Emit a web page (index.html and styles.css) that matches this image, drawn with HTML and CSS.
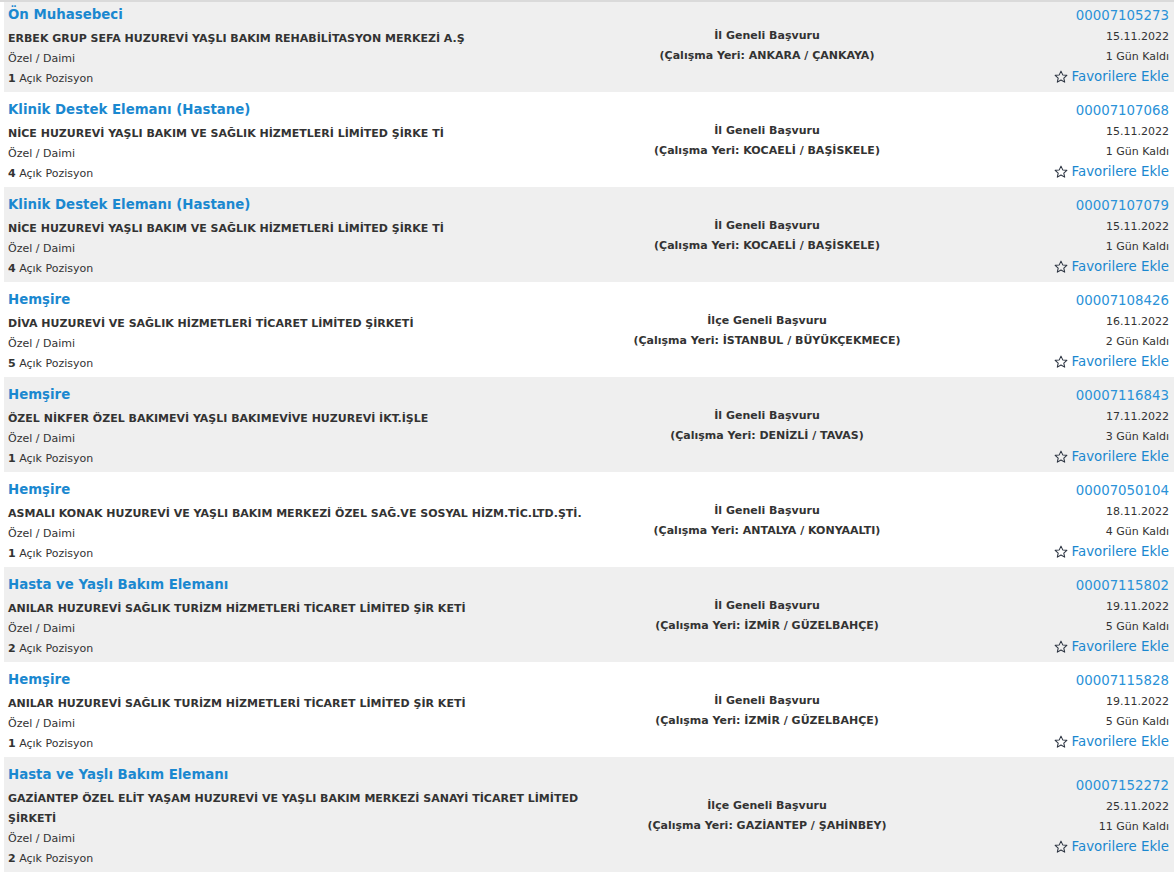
FILE: index.html
```html
<!doctype html>
<html lang="tr">
<head>
  <meta charset="utf-8" />
  <title>İş İlanları</title>
  <link rel="stylesheet" href="styles.css">
</head>
<body>

<div class="results">
  <ul class="list">
    <li class="job">
      <div class="job-main">
        <a class="job-title" href="#">Ön Muhasebeci</a>
        <div class="company">ERBEK GRUP SEFA HUZUREVİ YAŞLI BAKIM REHABİLİTASYON MERKEZİ A.Ş</div>
        <div class="meta">Özel / Daimi</div>
        <div class="meta"><b>1</b> Açık Pozisyon</div>
      </div>
      <div class="job-place">
        <div>İl Geneli Başvuru</div>
        <div>(Çalışma Yeri: ANKARA / ÇANKAYA)</div>
      </div>
      <div class="job-side">
        <a class="job-no" href="#">00007105273</a>
        <div>15.11.2022</div>
        <div>1 Gün Kaldı</div>
        <a class="fav" href="#"><svg viewBox="0 0 16 16" width="14" height="14"><path d="M8 1.3l2 4.3 4.7.5-3.5 3.2 1 4.6L8 11.5l-4.2 2.4 1-4.6L1.3 6.1 6 5.6z" /></svg>Favorilere Ekle</a>
      </div>
    </li>
    <li class="job">
      <div class="job-main">
        <a class="job-title" href="#">Klinik Destek Elemanı (Hastane)</a>
        <div class="company">NİCE HUZUREVİ YAŞLI BAKIM VE SAĞLIK HİZMETLERİ LİMİTED ŞİRKE Tİ</div>
        <div class="meta">Özel / Daimi</div>
        <div class="meta"><b>4</b> Açık Pozisyon</div>
      </div>
      <div class="job-place">
        <div>İl Geneli Başvuru</div>
        <div>(Çalışma Yeri: KOCAELİ / BAŞİSKELE)</div>
      </div>
      <div class="job-side">
        <a class="job-no" href="#">00007107068</a>
        <div>15.11.2022</div>
        <div>1 Gün Kaldı</div>
        <a class="fav" href="#"><svg viewBox="0 0 16 16" width="14" height="14"><path d="M8 1.3l2 4.3 4.7.5-3.5 3.2 1 4.6L8 11.5l-4.2 2.4 1-4.6L1.3 6.1 6 5.6z" /></svg>Favorilere Ekle</a>
      </div>
    </li>
    <li class="job">
      <div class="job-main">
        <a class="job-title" href="#">Klinik Destek Elemanı (Hastane)</a>
        <div class="company">NİCE HUZUREVİ YAŞLI BAKIM VE SAĞLIK HİZMETLERİ LİMİTED ŞİRKE Tİ</div>
        <div class="meta">Özel / Daimi</div>
        <div class="meta"><b>4</b> Açık Pozisyon</div>
      </div>
      <div class="job-place">
        <div>İl Geneli Başvuru</div>
        <div>(Çalışma Yeri: KOCAELİ / BAŞİSKELE)</div>
      </div>
      <div class="job-side">
        <a class="job-no" href="#">00007107079</a>
        <div>15.11.2022</div>
        <div>1 Gün Kaldı</div>
        <a class="fav" href="#"><svg viewBox="0 0 16 16" width="14" height="14"><path d="M8 1.3l2 4.3 4.7.5-3.5 3.2 1 4.6L8 11.5l-4.2 2.4 1-4.6L1.3 6.1 6 5.6z" /></svg>Favorilere Ekle</a>
      </div>
    </li>
    <li class="job">
      <div class="job-main">
        <a class="job-title" href="#">Hemşire</a>
        <div class="company">DİVA HUZUREVİ VE SAĞLIK HİZMETLERİ TİCARET LİMİTED ŞİRKETİ</div>
        <div class="meta">Özel / Daimi</div>
        <div class="meta"><b>5</b> Açık Pozisyon</div>
      </div>
      <div class="job-place">
        <div>İlçe Geneli Başvuru</div>
        <div>(Çalışma Yeri: İSTANBUL / BÜYÜKÇEKMECE)</div>
      </div>
      <div class="job-side">
        <a class="job-no" href="#">00007108426</a>
        <div>16.11.2022</div>
        <div>2 Gün Kaldı</div>
        <a class="fav" href="#"><svg viewBox="0 0 16 16" width="14" height="14"><path d="M8 1.3l2 4.3 4.7.5-3.5 3.2 1 4.6L8 11.5l-4.2 2.4 1-4.6L1.3 6.1 6 5.6z" /></svg>Favorilere Ekle</a>
      </div>
    </li>
    <li class="job">
      <div class="job-main">
        <a class="job-title" href="#">Hemşire</a>
        <div class="company">ÖZEL NİKFER ÖZEL BAKIMEVİ YAŞLI BAKIMEVİVE HUZUREVİ İKT.İŞLE</div>
        <div class="meta">Özel / Daimi</div>
        <div class="meta"><b>1</b> Açık Pozisyon</div>
      </div>
      <div class="job-place">
        <div>İl Geneli Başvuru</div>
        <div>(Çalışma Yeri: DENİZLİ / TAVAS)</div>
      </div>
      <div class="job-side">
        <a class="job-no" href="#">00007116843</a>
        <div>17.11.2022</div>
        <div>3 Gün Kaldı</div>
        <a class="fav" href="#"><svg viewBox="0 0 16 16" width="14" height="14"><path d="M8 1.3l2 4.3 4.7.5-3.5 3.2 1 4.6L8 11.5l-4.2 2.4 1-4.6L1.3 6.1 6 5.6z" /></svg>Favorilere Ekle</a>
      </div>
    </li>
    <li class="job">
      <div class="job-main">
        <a class="job-title" href="#">Hemşire</a>
        <div class="company">ASMALI KONAK HUZUREVİ VE YAŞLI BAKIM MERKEZİ ÖZEL SAĞ.VE SOSYAL HİZM.TİC.LTD.ŞTİ.</div>
        <div class="meta">Özel / Daimi</div>
        <div class="meta"><b>1</b> Açık Pozisyon</div>
      </div>
      <div class="job-place">
        <div>İl Geneli Başvuru</div>
        <div>(Çalışma Yeri: ANTALYA / KONYAALTI)</div>
      </div>
      <div class="job-side">
        <a class="job-no" href="#">00007050104</a>
        <div>18.11.2022</div>
        <div>4 Gün Kaldı</div>
        <a class="fav" href="#"><svg viewBox="0 0 16 16" width="14" height="14"><path d="M8 1.3l2 4.3 4.7.5-3.5 3.2 1 4.6L8 11.5l-4.2 2.4 1-4.6L1.3 6.1 6 5.6z" /></svg>Favorilere Ekle</a>
      </div>
    </li>
    <li class="job">
      <div class="job-main">
        <a class="job-title" href="#">Hasta ve Yaşlı Bakım Elemanı</a>
        <div class="company">ANILAR HUZUREVİ SAĞLIK TURİZM HİZMETLERİ TİCARET LİMİTED ŞİR KETİ</div>
        <div class="meta">Özel / Daimi</div>
        <div class="meta"><b>2</b> Açık Pozisyon</div>
      </div>
      <div class="job-place">
        <div>İl Geneli Başvuru</div>
        <div>(Çalışma Yeri: İZMİR / GÜZELBAHÇE)</div>
      </div>
      <div class="job-side">
        <a class="job-no" href="#">00007115802</a>
        <div>19.11.2022</div>
        <div>5 Gün Kaldı</div>
        <a class="fav" href="#"><svg viewBox="0 0 16 16" width="14" height="14"><path d="M8 1.3l2 4.3 4.7.5-3.5 3.2 1 4.6L8 11.5l-4.2 2.4 1-4.6L1.3 6.1 6 5.6z" /></svg>Favorilere Ekle</a>
      </div>
    </li>
    <li class="job">
      <div class="job-main">
        <a class="job-title" href="#">Hemşire</a>
        <div class="company">ANILAR HUZUREVİ SAĞLIK TURİZM HİZMETLERİ TİCARET LİMİTED ŞİR KETİ</div>
        <div class="meta">Özel / Daimi</div>
        <div class="meta"><b>1</b> Açık Pozisyon</div>
      </div>
      <div class="job-place">
        <div>İl Geneli Başvuru</div>
        <div>(Çalışma Yeri: İZMİR / GÜZELBAHÇE)</div>
      </div>
      <div class="job-side">
        <a class="job-no" href="#">00007115828</a>
        <div>19.11.2022</div>
        <div>5 Gün Kaldı</div>
        <a class="fav" href="#"><svg viewBox="0 0 16 16" width="14" height="14"><path d="M8 1.3l2 4.3 4.7.5-3.5 3.2 1 4.6L8 11.5l-4.2 2.4 1-4.6L1.3 6.1 6 5.6z" /></svg>Favorilere Ekle</a>
      </div>
    </li>
    <li class="job">
      <div class="job-main">
        <a class="job-title" href="#">Hasta ve Yaşlı Bakım Elemanı</a>
        <div class="company">GAZİANTEP ÖZEL ELİT YAŞAM HUZUREVİ VE YAŞLI BAKIM MERKEZİ SANAYİ TİCARET LİMİTED ŞİRKETİ</div>
        <div class="meta">Özel / Daimi</div>
        <div class="meta"><b>2</b> Açık Pozisyon</div>
      </div>
      <div class="job-place">
        <div>İlçe Geneli Başvuru</div>
        <div>(Çalışma Yeri: GAZİANTEP / ŞAHİNBEY)</div>
      </div>
      <div class="job-side">
        <a class="job-no" href="#">00007152272</a>
        <div>25.11.2022</div>
        <div>11 Gün Kaldı</div>
        <a class="fav" href="#"><svg viewBox="0 0 16 16" width="14" height="14"><path d="M8 1.3l2 4.3 4.7.5-3.5 3.2 1 4.6L8 11.5l-4.2 2.4 1-4.6L1.3 6.1 6 5.6z" /></svg>Favorilere Ekle</a>
      </div>
    </li>
  </ul>
</div>

</body>
</html>
```

FILE: styles.css
```css
body {
  font-family: "DejaVu Sans", Verdana, sans-serif;
  font-size: 11px;
  line-height: 20px;
  color: #333;
  margin: 0;
  background-color: #fff;
}
a {
  text-decoration: none;
}
.results {
  border-top: 2px solid #dadada;
  padding-left: 4px;
  overflow: hidden;
}
/* the list is scrolled a little, first row is cut at the top */
.list {
  list-style: none;
  margin: -5px 0 0;
  padding: 0;
}
.job {
  display: grid;
  grid-template-columns: 600px 326px 1fr;
}
.job:nth-child(odd) {
  background-color: #efefef;
}
.job-main {
  padding: 6px 4px 3px;
}
.job-title {
  display: block;
  font-size: 13.33px;
  font-weight: bold;
  line-height: 24px;
  margin-bottom: 2px;
  color: #1a88d0;
}
.company {
  font-weight: bold;
}
.meta b {
  font-weight: bold;
}
.job-place {
  align-self: center;
  padding-top: 2px;
  text-align: center;
  font-weight: bold;
}
.job-side {
  align-self: center;
  padding: 6px 5px 0 0;
  text-align: right;
}
.job-no {
  display: block;
  font-size: 13.33px;
  line-height: 22px;
  color: #2a92d8;
}
.fav {
  display: inline-flex;
  align-items: center;
  gap: 4px;
  font-size: 13.33px;
  color: #1a88d0;
}
.fav svg {
  fill: none;
  stroke: #2b3340;
  stroke-width: 1.2;
  stroke-linejoin: round;
}
```
